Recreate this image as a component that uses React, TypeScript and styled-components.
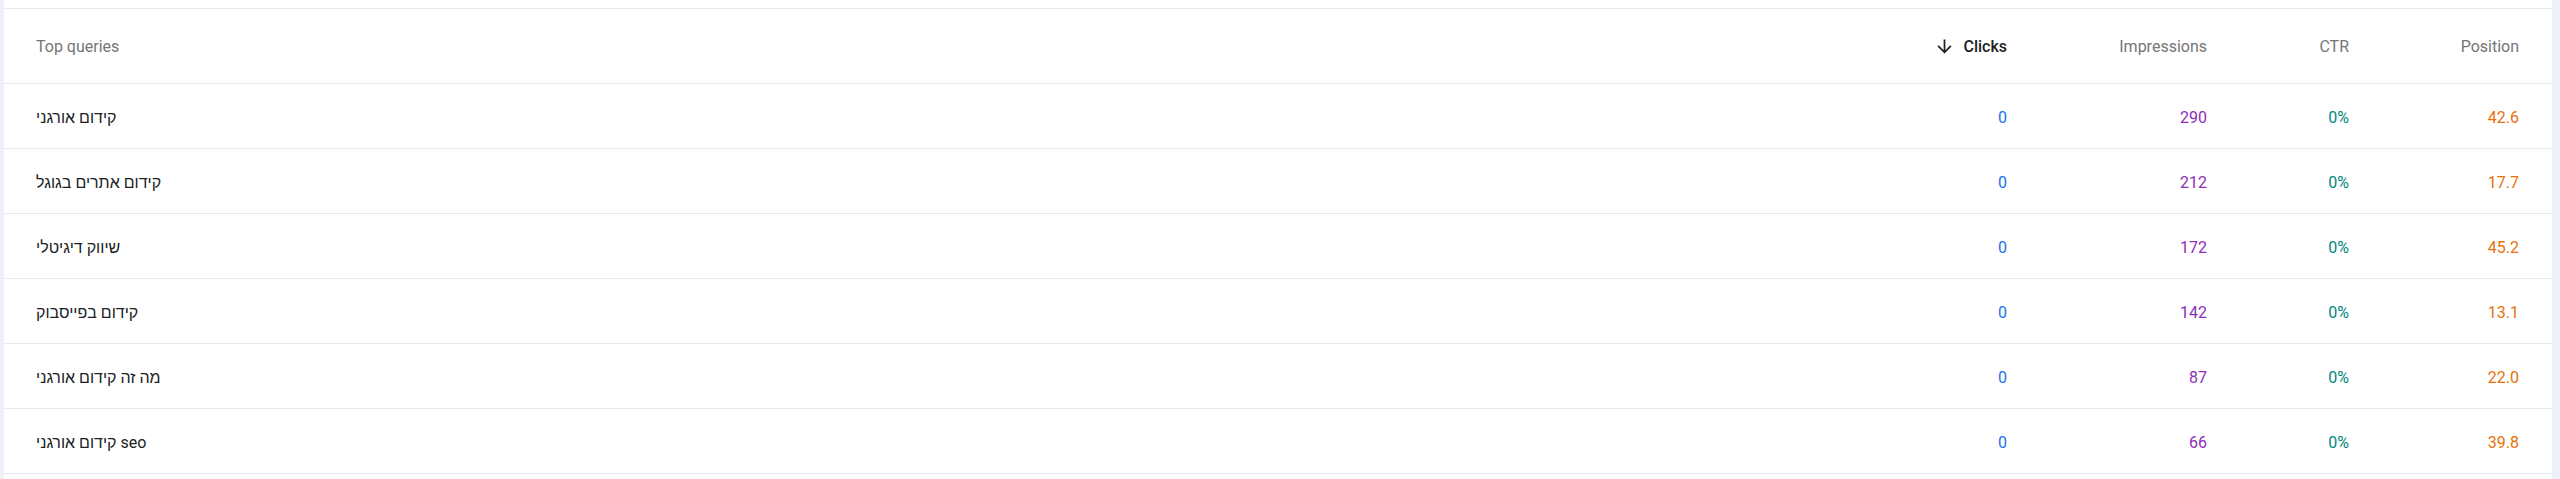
import React from 'react'
import styled, { createGlobalStyle } from 'styled-components'

const GlobalStyle = createGlobalStyle`
  html, body {
    margin: 0;
    padding: 0;
    background: #eef2f8;
  }
  body {
    font-family: Roboto, "Liberation Sans", Arial, sans-serif;
  }
`

const Page = styled.div`
  display: flex;
  flex-direction: column;
  padding: 0 8px 0 4px;
  min-height: 479px;
  box-sizing: border-box;
  background: #eef2f8;
`

const Card = styled.div`
  background: white;
  padding-top: 8px;
  flex: 1;
`

const Table = styled.div`
  border-top: 1px solid #e6e8eb;
`

const Row = styled.div<{ $header?: boolean }>`
  display: grid;
  grid-template-columns: 1fr 200px 200px 142px 170px;
  align-items: center;
  height: ${props => props.$header ? '74px' : '64px'};
  padding: 0 33px 0 32px;
  border-bottom: 1px solid #e6e8eb;
  font-size: 16px;
`

const HeadCell = styled.div<{ $active?: boolean; $numeric?: boolean }>`
  display: flex;
  align-items: center;
  justify-content: ${props => props.$numeric ? 'flex-end' : 'flex-start'};
  gap: 8px;
  color: ${props => props.$active ? '#202124' : '#757575'};
  font-weight: ${props => props.$active ? 500 : 400};
`

const Query = styled.div`
  color: #202124;
  font-family: Roboto, "Liberation Sans", Arial, sans-serif;
  margin-top: 2px;
`

const Num = styled.div<{ $color: string }>`
  text-align: right;
  color: ${props => props.$color};
  margin-top: 2px;
`

const SortIcon = () => (
  <svg width="21" height="21" viewBox="0 0 24 24" fill="#202124">
    <path d="M20 12l-1.41-1.41L13 16.17V4h-2v12.17l-5.58-5.59L4 12l8 8 8-8z" />
  </svg>
)

const data = [
  { q: 'קידום אורגני', clicks: 0, impressions: 290, ctr: '0%', position: '42.6' },
  { q: 'קידום אתרים בגוגל', clicks: 0, impressions: 212, ctr: '0%', position: '17.7' },
  { q: 'שיווק דיגיטלי', clicks: 0, impressions: 172, ctr: '0%', position: '45.2' },
  { q: 'קידום בפייסבוק', clicks: 0, impressions: 142, ctr: '0%', position: '13.1' },
  { q: 'מה זה קידום אורגני', clicks: 0, impressions: 87, ctr: '0%', position: '22.0' },
  { q: 'קידום אורגני seo', clicks: 0, impressions: 66, ctr: '0%', position: '39.8' }
]

const App: React.FC = () => {
  return (
    <>
      <GlobalStyle />
      <Page>
        <Card>
          <Table>
            <Row $header>
              <HeadCell>Top queries</HeadCell>
              <HeadCell $numeric $active>
                <SortIcon />
                Clicks
              </HeadCell>
              <HeadCell $numeric>Impressions</HeadCell>
              <HeadCell $numeric>CTR</HeadCell>
              <HeadCell $numeric>Position</HeadCell>
            </Row>
            {data.map(row => (
              <Row key={row.q}>
                <Query>{row.q}</Query>
                <Num $color="#1a73e8">{row.clicks}</Num>
                <Num $color="#8e2fb8">{row.impressions}</Num>
                <Num $color="#00897b">{row.ctr}</Num>
                <Num $color="#e8710a">{row.position}</Num>
              </Row>
            ))}
          </Table>
        </Card>
      </Page>
    </>
  )
}

export default App
